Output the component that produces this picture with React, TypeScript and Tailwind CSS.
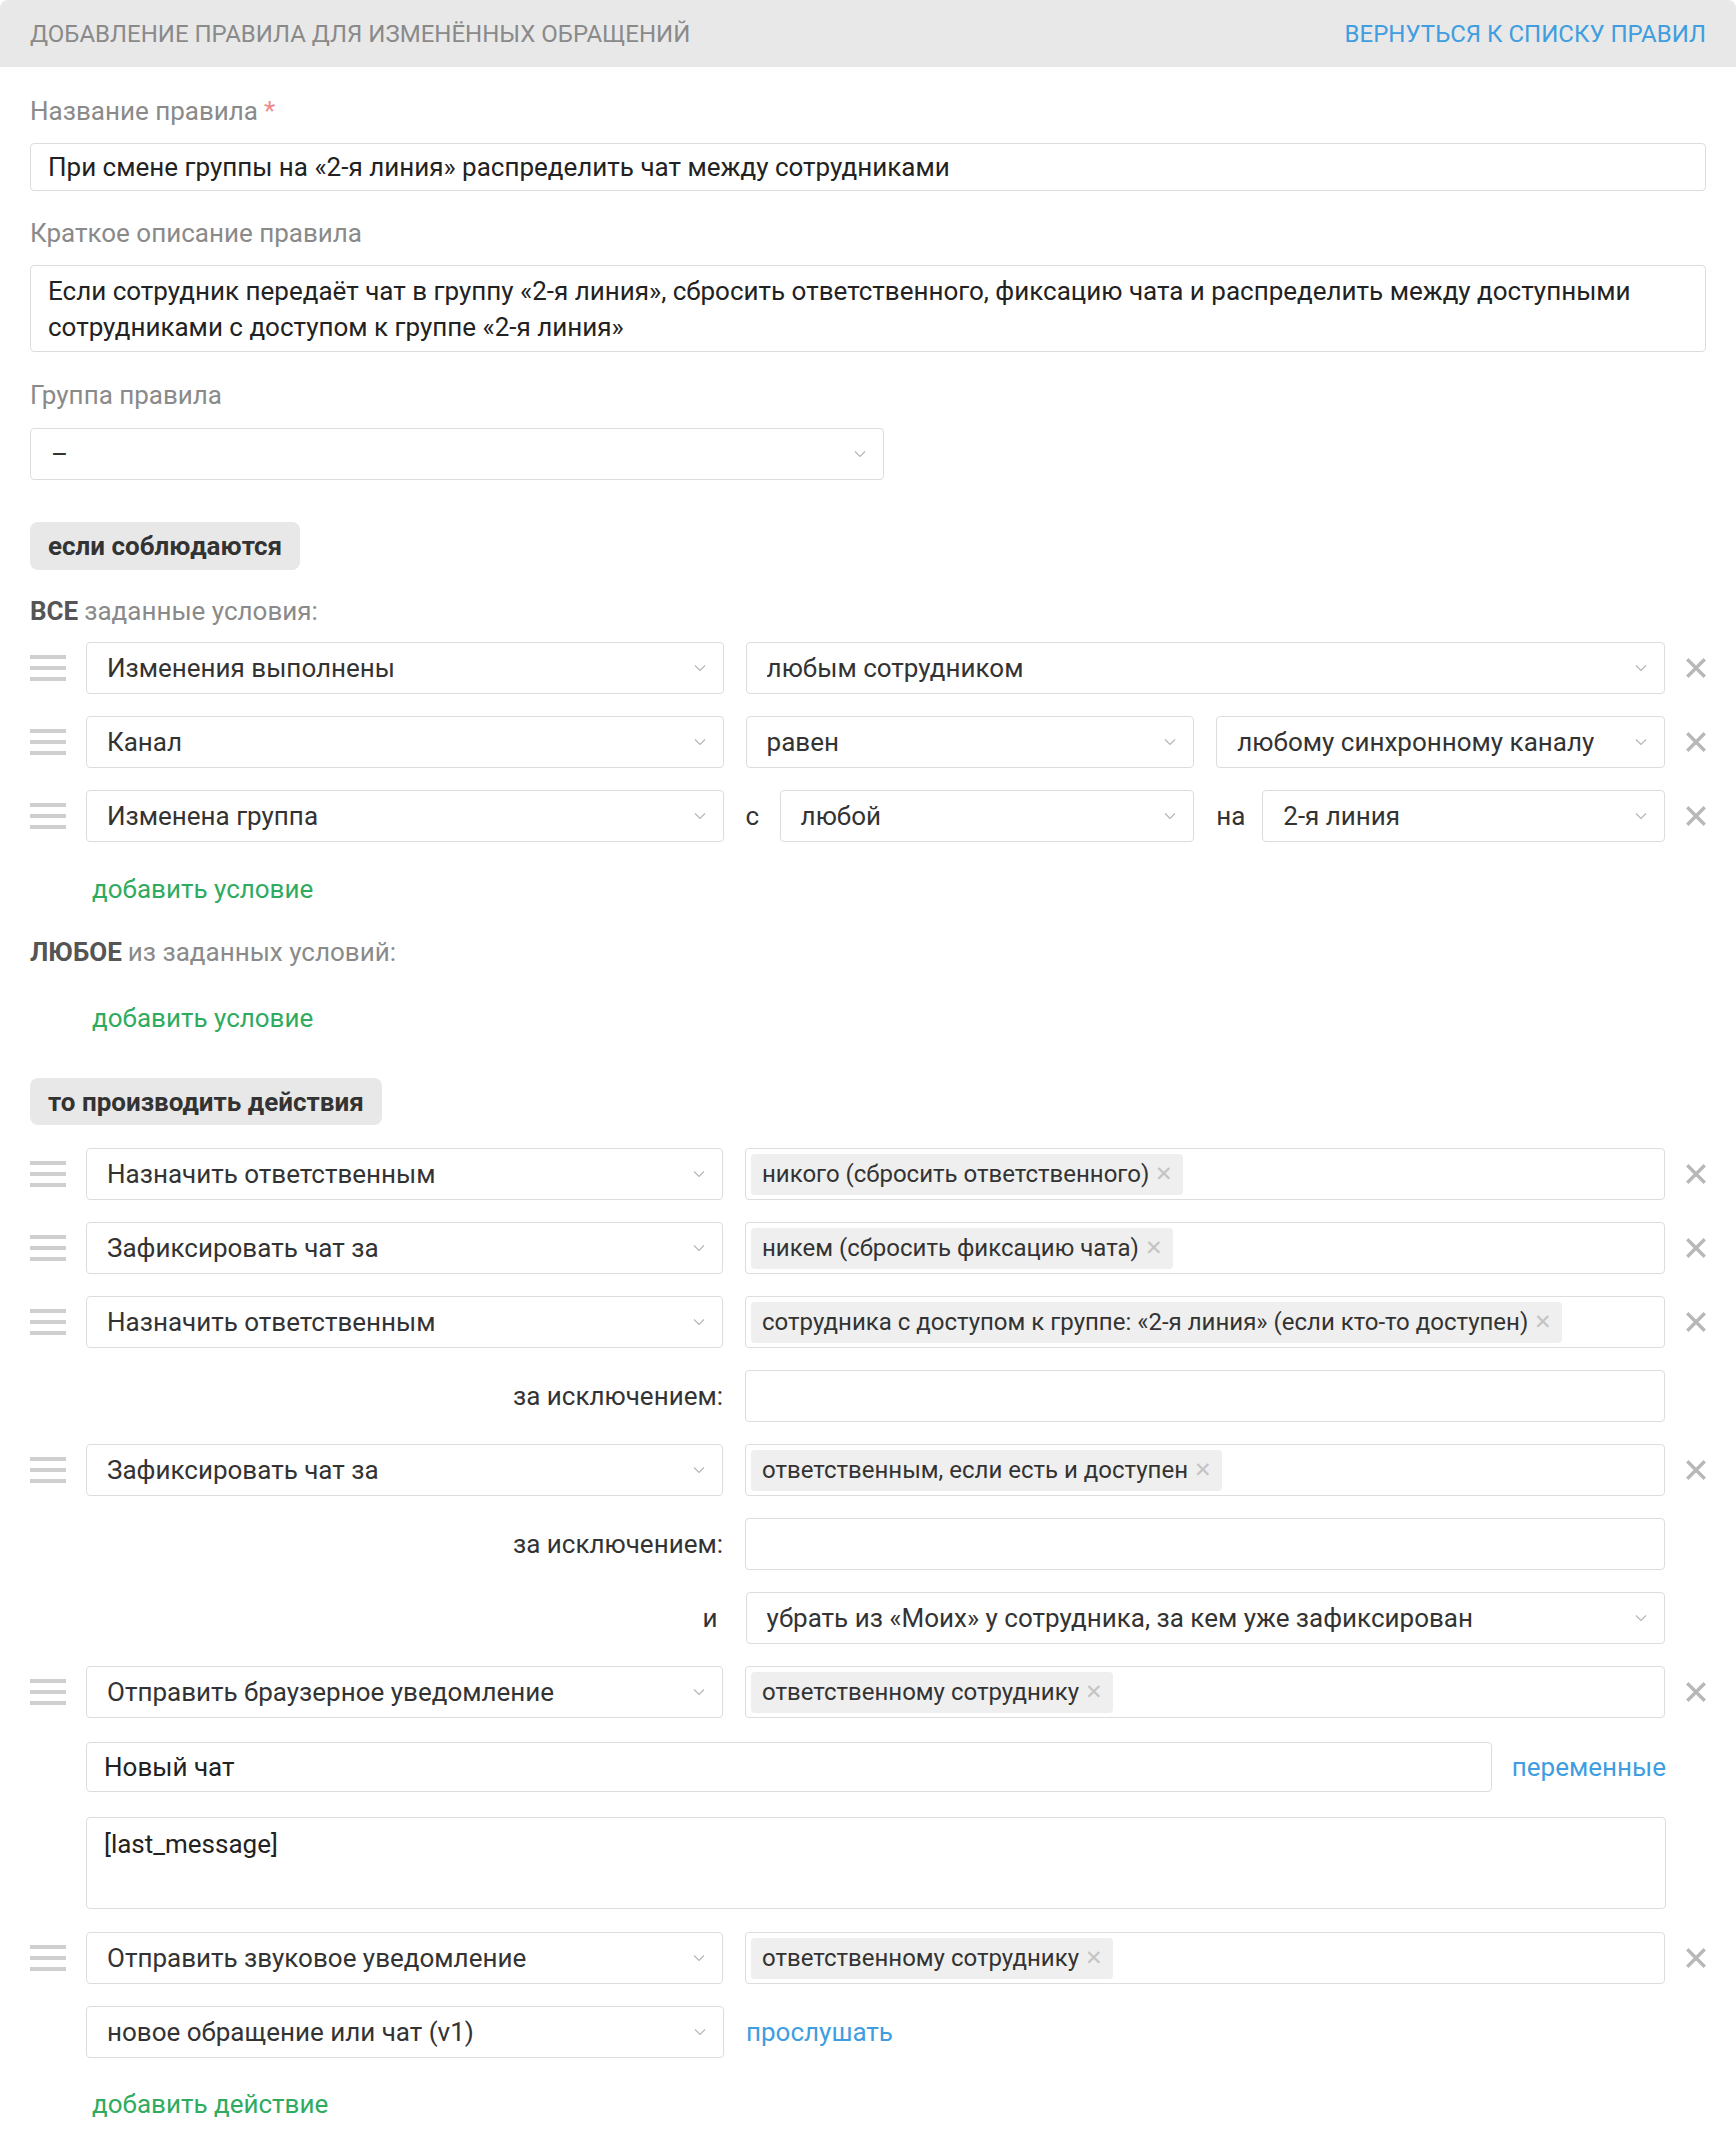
import React from "react"

const Chevron = () => (
  <svg width="12" height="8" viewBox="0 0 12 8" fill="none">
    <path d="M1 1.5 L6 6.5 L11 1.5" stroke="#b4b4b4" strokeWidth="1.1" />
  </svg>
)

const CloseX = () => (
  <svg width="20" height="20" viewBox="0 0 20 20" fill="none">
    <path d="M2.5 2.5 L17.5 17.5 M17.5 2.5 L2.5 17.5" stroke="#b8b8b8" strokeWidth="3.4" strokeLinecap="square" />
  </svg>
)

const Handle = () => (
  <div className="w-[36px] flex flex-col gap-[7px]">
    <div className="h-[4px] bg-[#cfcfcf]" />
    <div className="h-[4px] bg-[#cfcfcf]" />
    <div className="h-[4px] bg-[#cfcfcf]" />
  </div>
)

const Select = ({ value, className = "" }: { value: string; className?: string }) => (
  <div
    className={`h-[52px] flex items-center justify-between pl-[20px] pr-[17px] bg-white border border-[#dddddd] rounded-[4px] text-[#333333] ${className}`}
  >
    <span className="truncate">{value}</span>
    <Chevron />
  </div>
)

const Tag = ({ text }: { text: string }) => (
  <span className="h-[41px] flex items-center pl-[11px] pr-[10px] bg-[#efefef] rounded-[4px] text-[#333333] text-[24px]">
    {text}
    <span className="ml-[6px] text-[#c4c4c4] text-[21px]">✕</span>
  </span>
)

const MultiInput = ({ tag }: { tag?: string }) => (
  <div className="w-[920px] h-[52px] flex items-center px-[5px] bg-white border border-[#dddddd] rounded-[4px]">
    {tag && <Tag text={tag} />}
  </div>
)

const Row = ({ children, removable = true, handle = true }: { children: React.ReactNode; removable?: boolean; handle?: boolean }) => (
  <div className="flex items-center h-[52px]">
    <div className="w-[36px] mr-[20px]">{handle && <Handle />}</div>
    {children}
    <div className="w-[20px] ml-[21px] flex items-center">{removable && <CloseX />}</div>
  </div>
)

const SideLabel = ({ text }: { text: string }) => (
  <div className="w-[638px] text-right text-[#333333]">{text}</div>
)

const AddLink = ({ text, className = "" }: { text: string; className?: string }) => (
  <div className={`pl-[62px] h-[32px] flex items-center text-[#2fab5f] ${className}`}>{text}</div>
)

const Label = ({ children, className = "" }: { children: React.ReactNode; className?: string }) => (
  <div className={`h-[32px] flex items-center text-[#8a8a8a] ${className}`}>{children}</div>
)

const Pill = ({ text, className = "" }: { text: string; className?: string }) => (
  <div className={`self-start flex items-center px-[18px] bg-[#e8e8e8] rounded-[8px] font-bold text-[#333333] ${className}`}>
    {text}
  </div>
)

const App: React.FC = () => {
  return (
    <div className="w-[1736px] bg-white text-[26px] leading-[32px] font-['Roboto',sans-serif]">
      <div className="h-[67px] bg-[#e8e8e8] rounded-t-[8px] px-[30px] flex items-center justify-between uppercase text-[24px]">
        <span className="text-[#8a8a8a]">Добавление правила для изменённых обращений</span>
        <span className="text-[#3f9de0]">Вернуться к списку правил</span>
      </div>

      <div className="px-[30px] pb-[32px] flex flex-col">
        <Label className="mt-[28px]">
          Название правила<span className="text-[#ef8a8a] ml-[6px]">*</span>
        </Label>
        <div className="mt-[16px] h-[48px] flex items-center px-[17px] border border-[#dddddd] rounded-[4px] text-[#222222]">
          При смене группы на «2-я линия» распределить чат между сотрудниками
        </div>

        <Label className="mt-[26px]">Краткое описание правила</Label>
        <div className="mt-[16px] h-[87px] flex flex-col justify-center px-[17px] border border-[#dddddd] rounded-[4px] text-[#222222] leading-[36px]">
          <span>Если сотрудник передаёт чат в группу «2-я линия», сбросить ответственного, фиксацию чата и распределить между доступными</span>
          <span>сотрудниками с доступом к группе «2-я линия»</span>
        </div>

        <Label className="mt-[27px]">Группа правила</Label>
        <Select value="–" className="mt-[17px] w-[854px] h-[50px]" />

        <Pill text="если соблюдаются" className="mt-[42px] h-[48px]" />

        <Label className="mt-[25px]">
          <b className="text-[#555555] mr-[6px]">ВСЕ</b>заданные условия:
        </Label>

        <div className="mt-[15px] flex flex-col gap-[22px]">
          <Row>
            <Select value="Изменения выполнены" className="w-[638px]" />
            <Select value="любым сотрудником" className="w-[920px] ml-[22px]" />
          </Row>
          <Row>
            <Select value="Канал" className="w-[638px]" />
            <div className="w-[920px] ml-[22px] grid grid-cols-2 gap-[22px]">
              <Select value="равен" />
              <Select value="любому синхронному каналу" className="pl-[14px]" />
            </div>
          </Row>
          <Row>
            <Select value="Изменена группа" className="w-[638px]" />
            <div className="w-[920px] ml-[22px] grid grid-cols-2 gap-[22px]">
              <div className="flex items-center">
                <span className="w-[34px] text-[#333333]">с</span>
                <Select value="любой" className="flex-1 pl-[18px]" />
              </div>
              <div className="flex items-center">
                <span className="w-[46px] text-[#333333]">на</span>
                <Select value="2-я линия" className="flex-1 pl-[14px]" />
              </div>
            </div>
          </Row>
        </div>

        <AddLink text="добавить условие" className="mt-[31px]" />

        <Label className="mt-[31px]">
          <b className="text-[#555555] mr-[6px]">ЛЮБОЕ</b>из заданных условий:
        </Label>

        <AddLink text="добавить условие" className="mt-[34px]" />

        <Pill text="то производить действия" className="mt-[44px] h-[47px]" />

        <div className="mt-[23px] flex flex-col gap-[22px]">
          <Row>
            <Select value="Назначить ответственным" className="w-[638px]" />
            <div className="ml-[22px]"><MultiInput tag="никого (сбросить ответственного)" /></div>
          </Row>
          <Row>
            <Select value="Зафиксировать чат за" className="w-[638px]" />
            <div className="ml-[22px]"><MultiInput tag="никем (сбросить фиксацию чата)" /></div>
          </Row>
          <Row>
            <Select value="Назначить ответственным" className="w-[638px]" />
            <div className="ml-[22px]"><MultiInput tag="сотрудника с доступом к группе: «2-я линия» (если кто-то доступен)" /></div>
          </Row>
          <Row handle={false} removable={false}>
            <SideLabel text="за исключением:" />
            <div className="ml-[22px]"><MultiInput /></div>
          </Row>
          <Row>
            <Select value="Зафиксировать чат за" className="w-[638px]" />
            <div className="ml-[22px]"><MultiInput tag="ответственным, если есть и доступен" /></div>
          </Row>
          <Row handle={false} removable={false}>
            <SideLabel text="за исключением:" />
            <div className="ml-[22px]"><MultiInput /></div>
          </Row>
          <Row handle={false} removable={false}>
            <div className="w-[638px] text-right pr-[6px] text-[#333333]">и</div>
            <Select value="убрать из «Моих» у сотрудника, за кем уже зафиксирован" className="w-[920px] ml-[22px] pl-[18px]" />
          </Row>
          <Row>
            <Select value="Отправить браузерное уведомление" className="w-[638px]" />
            <div className="ml-[22px]"><MultiInput tag="ответственному сотруднику" /></div>
          </Row>
        </div>

        <div className="mt-[24px] ml-[56px] w-[1580px] flex items-center">
          <div className="w-[1406px] h-[50px] flex items-center px-[17px] border border-[#dddddd] rounded-[4px] text-[#222222]">
            Новый чат
          </div>
          <span className="ml-auto text-[#3f9de0]">переменные</span>
        </div>

        <div className="mt-[25px] ml-[56px] w-[1580px] h-[92px] px-[17px] pt-[10px] border border-[#dddddd] rounded-[4px] text-[#222222]">
          [last_message]
        </div>

        <div className="mt-[23px] flex flex-col gap-[22px]">
          <Row>
            <Select value="Отправить звуковое уведомление" className="w-[638px]" />
            <div className="ml-[22px]"><MultiInput tag="ответственному сотруднику" /></div>
          </Row>
          <Row handle={false} removable={false}>
            <Select value="новое обращение или чат (v1)" className="w-[638px]" />
            <span className="ml-[22px] text-[#3f9de0]">прослушать</span>
          </Row>
        </div>

        <AddLink text="добавить действие" className="mt-[30px]" />
      </div>
    </div>
  )
}

export default App
